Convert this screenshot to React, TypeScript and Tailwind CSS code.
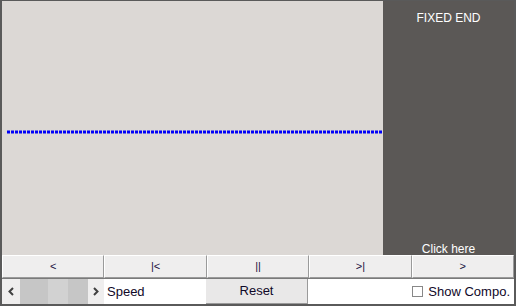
import React from 'react';

const font = { fontFamily: '"Liberation Sans", Arial, sans-serif' };

const NavButton: React.FC<{ label: string }> = ({ label }) => (
    <button className="flex items-center justify-center bg-[#efeeee] border-t border-l border-t-white border-l-white border-r border-b border-r-[#9a9a9a] border-b-[#9a9a9a] text-[11px] text-[#1a1040] leading-none">
        {label}
    </button>
);

const App: React.FC = () => {
    return (
        <div className="w-[516px] h-[306px] bg-[#5a5a5a] pl-[2px] pt-px pr-[2px] pb-[2px]" style={font}>
            <div className="flex flex-col h-full">
                {/* simulation area */}
                <div className="flex h-[254px]">
                    <div className="w-[381px] h-full bg-[#dcd8d5] relative">
                        <svg width="381" height="6" className="absolute left-0 top-[128px]">
                            <line x1="5" y1="3" x2="381" y2="3" stroke="#0000f8" strokeWidth="3" strokeDasharray="3 1" />
                        </svg>
                    </div>
                    <div className="flex-1 bg-[#5b5856] flex flex-col items-center justify-between pt-[10px] text-white text-[12px] leading-[14px]">
                        <span>FIXED END</span>
                        <span className="mb-[-1px]">Click here</span>
                    </div>
                </div>
                {/* transport buttons */}
                <div className="grid grid-cols-5 h-[23px] bg-[#efeeee]">
                    <NavButton label="<" />
                    <NavButton label="|<" />
                    <NavButton label="||" />
                    <NavButton label=">|" />
                    <NavButton label=">" />
                </div>
                {/* bottom controls */}
                <div className="flex flex-1 border-t border-[#7a7a7a] bg-white">
                    <div className="w-[102px] flex bg-[#efeeee]">
                        <div className="w-[18px] flex items-center justify-center">
                            <svg width="6" height="9" viewBox="0 0 6 9">
                                <path d="M5 1 L1.5 4.5 L5 8" fill="none" stroke="#404040" strokeWidth="2" />
                            </svg>
                        </div>
                        <div className="w-[68px] flex bg-[#c6c6c6]">
                            <div className="w-[28px]" />
                            <div className="w-[20px] bg-[#d2d2d2]" />
                        </div>
                        <div className="flex-1 flex items-center justify-center">
                            <svg width="6" height="9" viewBox="0 0 6 9">
                                <path d="M1 1 L4.5 4.5 L1 8" fill="none" stroke="#404040" strokeWidth="2" />
                            </svg>
                        </div>
                    </div>
                    <div className="w-[102px] flex items-center pl-[3px] text-[13px] text-[#100828]">Speed</div>
                    <button className="w-[102px] flex items-center justify-center bg-[#e9e8e8] border-r border-b border-r-[#9a9a9a] border-b-[#9a9a9a] text-[13px] text-[#100828]">
                        Reset
                    </button>
                    <div className="flex-1 flex items-center justify-end pr-[4px] text-[13px] text-[#100828]">
                        <span className="w-[11px] h-[11px] border border-[#888] bg-white mr-[5px]" />
                        <span>Show Compo.</span>
                    </div>
                </div>
            </div>
        </div>
    );
};

export default App;
